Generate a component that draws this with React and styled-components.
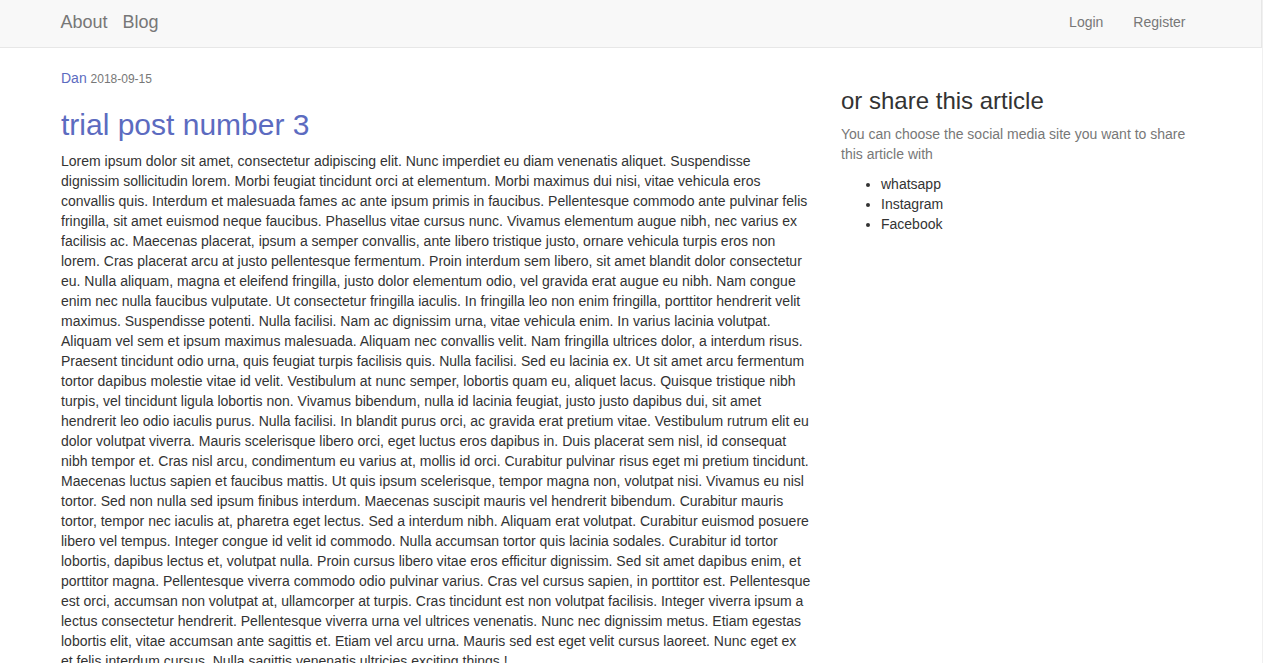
import React from "react";
import styled, { createGlobalStyle } from "styled-components";

const GlobalStyle = createGlobalStyle`
  html, body {
    margin: 0;
    padding: 0;
    background: #fff;
  }
  body {
    font-family: "Liberation Sans", Arial, Helvetica, sans-serif;
    font-size: 14px;
    line-height: 1.42857143;
    color: #333;
  }
  * {
    box-sizing: border-box;
  }
`;

const Page = styled.div`
  width: 1263px;
  min-height: 100vh;
  border-right: 1px solid #f0f0f0;
`;

const Navbar = styled.nav`
  height: 48px;
  background-color: #f8f8f8;
  border-bottom: 1px solid #e7e7e7;
  border-right: 1px solid #e7e7e7;
`;

const NavInner = styled.div`
  width: 1170px;
  height: 100%;
  margin: 0 auto;
  padding: 0 15px;
  display: flex;
  align-items: center;
  justify-content: space-between;
`;

const Brand = styled.div`
  display: flex;
  gap: 15px;
`;

const BrandLink = styled.a`
  font-size: 18px;
  line-height: 20px;
  color: #777;
  text-decoration: none;
  padding-bottom: 3px;
`;

const NavRight = styled.div`
  display: flex;
`;

const NavLink = styled.a`
  font-size: 14px;
  line-height: 20px;
  color: #777;
  text-decoration: none;
  padding: 0 15px 3px;
`;

const Container = styled.div`
  width: 1170px;
  margin: 20px auto 0;
  padding: 0 15px;
  display: grid;
  grid-template-columns: 750px 360px;
  column-gap: 30px;
  align-items: start;
`;

const Meta = styled.div`
  line-height: 20px;
`;

const Author = styled.a`
  color: #5c6bc0;
  text-decoration: none;
`;

const Date = styled.small`
  font-size: 12px;
  color: #777;
`;

const Title = styled.h2`
  margin: 19px 0 10px;
  font-size: 30px;
  font-weight: 500;
  line-height: 1.1;
  color: #5c6bc0;
`;

const Body = styled.p`
  margin: 0 0 10px;
`;

const SideTitle = styled.h3`
  margin: 20px 0 10px;
  font-size: 24px;
  font-weight: 500;
  line-height: 1.1;
  color: #333;
`;

const Muted = styled.p`
  margin: 0 0 10px;
  color: #777;
`;

const ShareList = styled.ul`
  margin: 0 0 10px;
  padding-left: 40px;
`;

const text =
  "Lorem ipsum dolor sit amet, consectetur adipiscing elit. Nunc imperdiet eu diam venenatis aliquet. Suspendisse dignissim sollicitudin lorem. Morbi feugiat tincidunt orci at elementum. Morbi maximus dui nisi, vitae vehicula eros convallis quis. Interdum et malesuada fames ac ante ipsum primis in faucibus. Pellentesque commodo ante pulvinar felis fringilla, sit amet euismod neque faucibus. Phasellus vitae cursus nunc. Vivamus elementum augue nibh, nec varius ex facilisis ac. Maecenas placerat, ipsum a semper convallis, ante libero tristique justo, ornare vehicula turpis eros non lorem. Cras placerat arcu at justo pellentesque fermentum. Proin interdum sem libero, sit amet blandit dolor consectetur eu. Nulla aliquam, magna et eleifend fringilla, justo dolor elementum odio, vel gravida erat augue eu nibh. Nam congue enim nec nulla faucibus vulputate. Ut consectetur fringilla iaculis. In fringilla leo non enim fringilla, porttitor hendrerit velit maximus. Suspendisse potenti. Nulla facilisi. Nam ac dignissim urna, vitae vehicula enim. In varius lacinia volutpat. Aliquam vel sem et ipsum maximus malesuada. Aliquam nec convallis velit. Nam fringilla ultrices dolor, a interdum risus. Praesent tincidunt odio urna, quis feugiat turpis facilisis quis. Nulla facilisi. Sed eu lacinia ex. Ut sit amet arcu fermentum tortor dapibus molestie vitae id velit. Vestibulum at nunc semper, lobortis quam eu, aliquet lacus. Quisque tristique nibh turpis, vel tincidunt ligula lobortis non. Vivamus bibendum, nulla id lacinia feugiat, justo justo dapibus dui, sit amet hendrerit leo odio iaculis purus. Nulla facilisi. In blandit purus orci, ac gravida erat pretium vitae. Vestibulum rutrum elit eu dolor volutpat viverra. Mauris scelerisque libero orci, eget luctus eros dapibus in. Duis placerat sem nisl, id consequat nibh tempor et. Cras nisl arcu, condimentum eu varius at, mollis id orci. Curabitur pulvinar risus eget mi pretium tincidunt. Maecenas luctus sapien et faucibus mattis. Ut quis ipsum scelerisque, tempor magna non, volutpat nisi. Vivamus eu nisl tortor. Sed non nulla sed ipsum finibus interdum. Maecenas suscipit mauris vel hendrerit bibendum. Curabitur mauris tortor, tempor nec iaculis at, pharetra eget lectus. Sed a interdum nibh. Aliquam erat volutpat. Curabitur euismod posuere libero vel tempus. Integer congue id velit id commodo. Nulla accumsan tortor quis lacinia sodales. Curabitur id tortor lobortis, dapibus lectus et, volutpat nulla. Proin cursus libero vitae eros efficitur dignissim. Sed sit amet dapibus enim, et porttitor magna. Pellentesque viverra commodo odio pulvinar varius. Cras vel cursus sapien, in porttitor est. Pellentesque est orci, accumsan non volutpat at, ullamcorper at turpis. Cras tincidunt est non volutpat facilisis. Integer viverra ipsum a lectus consectetur hendrerit. Pellentesque viverra urna vel ultrices venenatis. Nunc nec dignissim metus. Etiam egestas lobortis elit, vitae accumsan ante sagittis et. Etiam vel arcu urna. Mauris sed est eget velit cursus laoreet. Nunc eget ex et felis interdum cursus. Nulla sagittis venenatis ultricies exciting things !";

const shares = ["whatsapp", "Instagram", "Facebook"];

const App = () => {
  return (
    <Page>
      <GlobalStyle />
      <Navbar>
        <NavInner>
          <Brand>
            <BrandLink href="#">About</BrandLink>
            <BrandLink href="#">Blog</BrandLink>
          </Brand>
          <NavRight>
            <NavLink href="#">Login</NavLink>
            <NavLink href="#">Register</NavLink>
          </NavRight>
        </NavInner>
      </Navbar>
      <Container>
        <article>
          <Meta>
            <Author href="#">Dan</Author> <Date>2018-09-15</Date>
          </Meta>
          <Title>trial post number 3</Title>
          <Body>{text}</Body>
        </article>
        <aside>
          <SideTitle>or share this article</SideTitle>
          <Muted>You can choose the social media site you want to share this article with</Muted>
          <ShareList>
            {shares.map((s) => (
              <li key={s}>{s}</li>
            ))}
          </ShareList>
        </aside>
      </Container>
    </Page>
  );
};

export default App;
